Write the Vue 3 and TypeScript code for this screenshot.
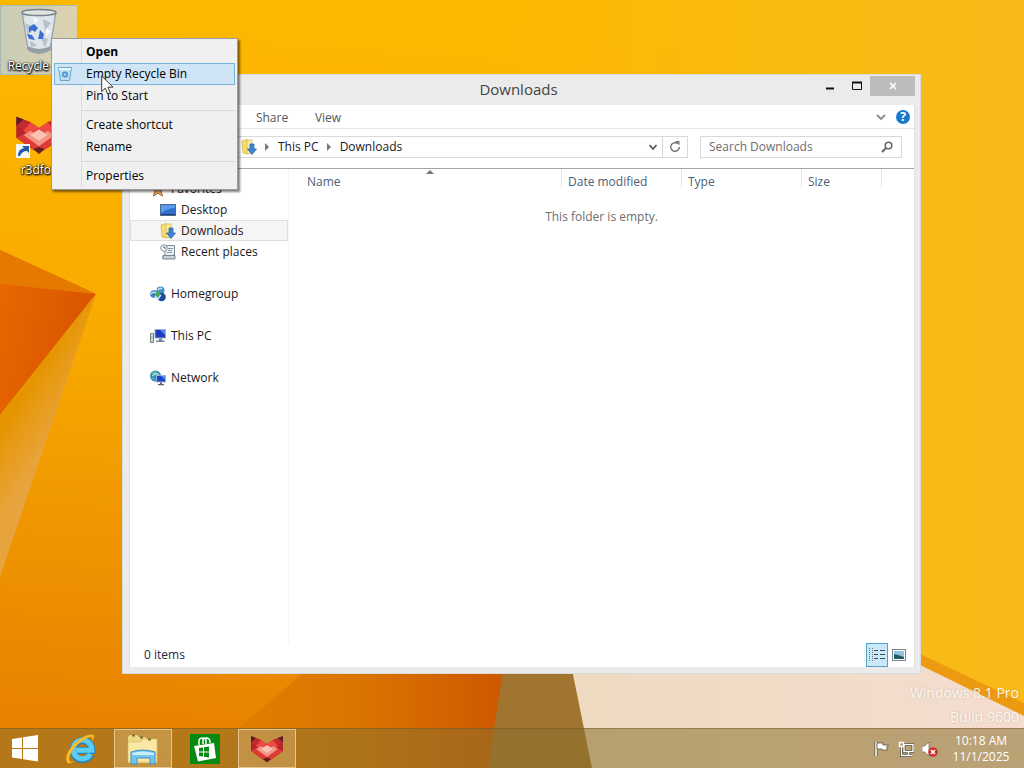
<script setup lang="ts">
import { ref } from 'vue'

interface MenuItem { label: string; bold?: boolean; icon?: boolean }
interface Place { label: string; icon: string; child?: boolean; gap?: boolean; current?: boolean }

const menuGroups: MenuItem[][] = [
  [{ label: 'Open', bold: true }, { label: 'Empty Recycle Bin', icon: true }, { label: 'Pin to Start' }],
  [{ label: 'Create shortcut' }, { label: 'Rename' }],
  [{ label: 'Properties' }],
]
const active = ref('Empty Recycle Bin')

const tabs = ['Share', 'View']
const places: Place[] = [
  { label: 'Favorites', icon: 'star' },
  { label: 'Desktop', icon: 'desktop', child: true },
  { label: 'Downloads', icon: 'downloads', child: true, current: true },
  { label: 'Recent places', icon: 'recent', child: true },
  { label: 'Homegroup', icon: 'homegroup', gap: true },
  { label: 'This PC', icon: 'pc', gap: true },
  { label: 'Network', icon: 'network', gap: true },
]
const search = ref('')
</script>

<template>
  <div class="desktop">
    <svg class="symbols" aria-hidden="true">
      <symbol id="star" viewBox="0 0 16 16">
        <path d="M8 1l2 5 5 .4-4 3.400 1.500 5.200L8 12.200 3.500 15 5 9.800 1 6.400 6 6z" fill="#e8a860" stroke="#a8672c" />
      </symbol>
      <symbol id="desktop" viewBox="0 0 16 16">
        <rect x=".5" y="2.500" width="15" height="11" fill="#2f6fd0" stroke="#4a6790" />
        <path d="M1 3h14v3Q8 6 1 11z" fill="#5b9cec" />
        <path d="M1 12.500h14" stroke="#20406f" />
      </symbol>
      <symbol id="downloads" viewBox="0 0 16 16">
        <path d="M1 2l5-1.500 1 1.500V15l-5-1z" fill="#f6dc74" stroke="#d6ad3c" stroke-width=".7" />
        <path d="M6 1h5V14.500H6z" fill="#fbe99b" stroke="#d9b64c" stroke-width=".7" />
        <path d="M9 5h4v5h2.500l-4.500 5.500L6.500 10H9z" fill="#3b87d6" stroke="#1d5aa4" stroke-width=".7" />
      </symbol>
      <symbol id="recent" viewBox="0 0 16 16">
        <path d="M5 1.500h9.500V11H13v3.500H3.500Q2 14 3 12h2z" fill="#eef2f5" stroke="#7c8a96" />
        <path d="M3 11.500h12v3.500H3z" fill="#c9d2da" stroke="#77848f" />
        <path d="M8 4.500h5M8 6.500h4M7 8.500h5" stroke="#8795a2" />
        <circle cx="4" cy="4" r="3.300" fill="#f4f7f9" stroke="#8c99a5" />
        <path d="M4 2v2h2" fill="none" stroke="#5e6b77" />
      </symbol>
      <symbol id="homegroup" viewBox="0 0 16 16">
        <circle cx="10.500" cy="4.500" r="4" fill="#4292c8" />
        <circle cx="4" cy="8" r="3.800" fill="#3d79c8" />
        <circle cx="11.500" cy="11" r="4.300" fill="#1f4c9f" />
        <circle cx="7.500" cy="8.500" r="3" fill="#49a95b" />
        <path d="M8 4q2-3 4-1M1 8q2-3 5-1M5 10l3 3 3-4" stroke="#c6e7f5" stroke-width="1.400" fill="none" />
      </symbol>
      <symbol id="pc" viewBox="0 0 16 16">
        <path d="M.5 5.500h3v9h-3z" fill="#cad8dc" stroke="#718580" />
        <path d="M1.500 9h1" stroke="#2ea242" />
        <rect x="5" y="1.500" width="10.500" height="8.500" fill="#1f39bf" stroke="#9aaac8" />
        <path d="M10 2h5v5z" fill="#5d85f0" />
        <path d="M9 10.500h3v2h2.500v1.500H6v-1.500h3z" fill="#75859e" />
      </symbol>
      <symbol id="network" viewBox="0 0 16 16">
        <circle cx="5.500" cy="6" r="5.500" fill="#338fc0" />
        <path d="M2 3q3-3 5 0t-4 2zM1 8q3-1 4 2z" fill="#68c58a" />
        <path d="M2 6q3-3 7-2" stroke="#cceaf2" fill="none" />
        <rect x="6.500" y="5.500" width="9" height="6.500" fill="#1b42cc" stroke="#9cb1d0" />
        <path d="M11 6h4v4z" fill="#5a8af2" />
        <path d="M10 12.500h2V14h2v1.300H8V14h2z" fill="#51647f" />
      </symbol>
      <symbol id="fox" viewBox="0 0 34 28">
        <path d="M1 1l10 4 6 4 6-4 10-4v15l-8 6-8 5-8-5-8-6z" fill="#d6322f" />
        <path d="M1 6l8 8-8 2zM33 6l-8 8 8 2z" fill="#b4252a" />
        <path d="M1 1l10 4-5 6-5-4zM33 1L23 5l5 6 5-4z" fill="#c12b2d" />
        <path d="M11 5l6 4-6 6-5-4zM23 5l-6 4 6 6 5-4z" fill="#ec4a42" />
        <path d="M1 1l5 2-5 4.500zM33 1l-5 2 5 4.500z" fill="#5a1f26" />
        <path d="M1 16l8-4 8 6 8-6 8 4-16 11z" fill="#dd3b37" />
        <path d="M6 14l5-3 6 4 6-4 5 3-11 8z" fill="#f39484" />
        <path d="M11 14l6-4 6 4-6 4z" fill="#fbc3b5" />
        <path d="M13 24l4-1.500 4 1.500-4 3.500z" fill="#62201f" />
      </symbol>
    </svg>

    <svg class="wallpaper" viewBox="0 0 1024 768" preserveAspectRatio="none" aria-hidden="true">
      <defs>
        <linearGradient id="sky" x1=".3" y1="0" x2=".2" y2="1">
          <stop offset="0" stop-color="#fdb900" /><stop offset=".45" stop-color="#f9aa00" />
          <stop offset=".75" stop-color="#ee9200" /><stop offset="1" stop-color="#e67f00" />
        </linearGradient>
        <linearGradient id="facet" x1="0" y1="0" x2="1" y2="0">
          <stop offset="0" stop-color="#e28000" /><stop offset=".5" stop-color="#db7700" /><stop offset="1" stop-color="#cd5700" />
        </linearGradient>
        <linearGradient id="side" x1="0" y1="0" x2="1" y2="0">
          <stop offset="0" stop-color="#fabb10" stop-opacity="0" /><stop offset=".5" stop-color="#fabb10" /><stop offset="1" stop-color="#f9ba18" />
        </linearGradient>
        <linearGradient id="beam" gradientUnits="userSpaceOnUse" x1="20" y1="400" x2="60" y2="425">
          <stop offset="0" stop-color="#e69500" /><stop offset="1" stop-color="#e8a43c" />
        </linearGradient>
        <linearGradient id="sand" x1="0" y1="0" x2="1" y2="0">
          <stop offset="0" stop-color="#eedac0" /><stop offset="1" stop-color="#f4ddd0" />
        </linearGradient>
        <linearGradient id="red" x1="0" y1="0" x2="1" y2=".4">
          <stop offset="0" stop-color="#e96900" /><stop offset="1" stop-color="#d95400" />
        </linearGradient>
      </defs>
      <rect width="1024" height="768" fill="url(#sky)" />
      <path d="M500 0h524v768H500z" fill="url(#side)" />
      <path d="M0 250l96 44L0 415z" fill="url(#red)" />
      <path d="M0 250l96 44L0 284z" fill="#e67900" />
      <path d="M96 294L0 415v162z" fill="url(#beam)" />
      <path d="M240 727l62-53h205l-10 94H190z" fill="url(#facet)" />
      <path d="M506 650l-18 118h110l-28-118z" fill="#a1742f" />
      <path d="M568 650l24 118h432v-56l-103-55z" fill="url(#sand)" />
      <path d="M918 653l106 50v13l-106-52z" fill="#eb9a12" />
    </svg>

    <main class="icons">
      <button class="shortcut selected">
        <svg width="48" height="48" viewBox="0 0 48 48" aria-hidden="true">
          <path d="M7 4h34l-6 38q-11 7-22 0z" fill="#ccd5db" fill-opacity=".9" stroke="#8d9aa2" />
          <path d="M9 9l9-5 8 5 10-4 3 5-5 31q-10 5-20 0z" fill="#dfe6eb" />
          <path d="M10 15l8 4-5 8zM28 11l8 4-6 8zM26 29l7 2-3 9zM15 33l7 4-6 3z" fill="#b3c2cd" />
          <path d="M18 8l6 4-5 4zM31 20l5 3-5 5z" fill="#f6fafc" />
          <path d="M12 38q12 6 24 0l-1 4q-11 6-22 0z" fill="#929da4" />
          <ellipse cx="24" cy="4.500" rx="17" ry="3" fill="#dfe3e2" stroke="#78838a" stroke-width="1.500" />
          <path d="M14 19l5-3 4 4-3 4-3-2-3 3zM25 22l4 4-1 5h-5l1-4zM12 26l5 1 3 5-6-1z" fill="#3b6fd4" />
        </svg>
        <span>Recycle Bin</span>
      </button>
      <button class="shortcut">
        <svg width="48" height="48" viewBox="0 0 48 48" aria-hidden="true">
          <use href="#fox" x="0" y="3" width="48" height="40" />
          <rect x="1" y="32" width="14" height="14" fill="#f5f7f8" />
          <path d="M3 44q0-7 6-8l-2-2h7v7l-2-2q-5 0-7 5z" fill="#215ca5" />
        </svg>
        <span>r3dfox</span>
      </button>
    </main>

    <div class="watermark">Windows 8.1 Pro<br />Build 9600</div>

    <section class="window" aria-label="Downloads">
      <header class="titlebar">
        <h1>Downloads</h1>
        <button class="win-btn" aria-label="Minimize">
          <svg width="10" height="12" viewBox="0 0 10 12"><path d="M1 8.500h8" stroke="#111" stroke-width="2" /></svg>
        </button>
        <button class="win-btn" aria-label="Maximize">
          <svg width="10" height="12" viewBox="0 0 10 12"><path d="M.5 2v7.500h9V2" fill="none" stroke="#111" /><path d="M0 2.500h10" stroke="#111" stroke-width="2" /></svg>
        </button>
        <button class="win-btn close" aria-label="Close">
          <svg width="8" height="8" viewBox="0 0 8 8"><path d="M1 1l6 6M7 1L1 7" stroke="#fff" stroke-width="1.600" /></svg>
        </button>
      </header>

      <div class="client">
        <div class="ribbon">
          <button v-for="tab in tabs" :key="tab" class="tab">{{ tab }}</button>
          <span class="spacer"></span>
          <button class="plain" aria-label="Expand the Ribbon">
            <svg width="10" height="8" viewBox="0 0 10 8"><path d="M1 2l4 4 4-4" fill="none" stroke="#8b8b8b" stroke-width="1.800" /></svg>
          </button>
          <button class="help" aria-label="Help">?</button>
        </div>

        <div class="location">
          <nav class="crumbs" aria-label="Address">
            <svg width="16" height="16"><use href="#downloads" /></svg>
            <svg class="sep" width="5" height="8" viewBox="0 0 5 8"><path d="M0 0l4 4-4 4z" fill="#777" /></svg>
            <a href="#">This PC</a>
            <svg class="sep" width="5" height="8" viewBox="0 0 5 8"><path d="M0 0l4 4-4 4z" fill="#777" /></svg>
            <a href="#">Downloads</a>
            <span class="spacer"></span>
            <button class="plain" aria-label="Previous locations">
              <svg width="10" height="8" viewBox="0 0 10 8"><path d="M1.500 2L5 6l3.500-4" fill="none" stroke="#555" stroke-width="1.800" /></svg>
            </button>
            <button class="refresh" aria-label="Refresh">
              <svg width="12" height="12" viewBox="0 0 12 12"><path d="M8.500 2.500A4.300 4.300 0 1 0 10.300 6" fill="none" stroke="#777" stroke-width="1.500" /><path d="M6 0h4.500v4.500z" fill="#777" /></svg>
            </button>
          </nav>
          <label class="search">
            <input v-model="search" type="text" placeholder="Search Downloads" aria-label="Search Downloads" />
            <svg width="12" height="12" viewBox="0 0 12 12" aria-hidden="true"><circle cx="7.500" cy="4.500" r="3.300" fill="none" stroke="#666" stroke-width="1.600" /><path d="M5 7l-4 4" stroke="#666" stroke-width="2" /></svg>
          </label>
        </div>

        <div class="body">
          <nav class="places" aria-label="Places">
            <a v-for="p in places" :key="p.label" href="#" :class="{ child: p.child, gap: p.gap, current: p.current }">
              <svg width="16" height="16" aria-hidden="true"><use :href="'#' + p.icon" /></svg>{{ p.label }}
            </a>
          </nav>
          <div class="files">
            <table>
              <colgroup><col /><col class="c120" /><col class="c120" /><col class="c80" /><col class="c32" /></colgroup>
              <thead>
                <tr>
                  <th class="name">Name
                    <svg class="sort" width="8" height="4" viewBox="0 0 8 4"><path d="M0 4l4-4 4 4z" fill="#777" /></svg>
                  </th>
                  <th>Date modified</th><th>Type</th><th>Size</th><th class="last"></th>
                </tr>
              </thead>
              <tbody><tr><td colspan="5">This folder is empty.</td></tr></tbody>
            </table>
          </div>
        </div>

        <footer class="status">
          <span>0 items</span>
          <span class="spacer"></span>
          <button class="view on" aria-label="Details view">
            <svg width="16" height="14" viewBox="0 0 16 14">
              <path d="M.5 0v14M3.500 0v14" stroke="#667b88" stroke-dasharray="1 1" />
              <path d="M5 2.500h4M11 2.500h5M5 6.500h4M11 6.500h5M5 10.500h4M11 10.500h5" stroke="#3d4d58" />
            </svg>
          </button>
          <button class="view" aria-label="Large thumbnails">
            <svg width="14" height="12" viewBox="0 0 14 12">
              <rect x=".5" y=".5" width="13" height="11" fill="#fff" stroke="#77848d" />
              <path d="M2 2h10v8H2z" fill="#8fc4dc" /><path d="M2 5l4 1 6 2v2H2z" fill="#245a68" />
            </svg>
          </button>
        </footer>
      </div>
    </section>

    <div class="menu" role="menu">
      <div v-for="(group, i) in menuGroups" :key="i" class="group">
        <button
          v-for="item in group" :key="item.label" role="menuitem"
          :class="{ bold: item.bold, active: item.label === active }" @mouseenter="active = item.label"
        >
          <span class="glyph">
            <svg v-if="item.icon" width="16" height="16" viewBox="0 0 16 16" aria-hidden="true">
              <path d="M1.500 1.500h13l-2 13h-9z" fill="#b9dff3" stroke="#6ba6ca" />
              <path d="M2 3h12" stroke="#eefaff" stroke-width="2" />
              <circle cx="8" cy="8.500" r="2.300" fill="#9fc9ec" stroke="#4d93d0" stroke-width="1.500" />
            </svg>
          </span>{{ item.label }}
        </button>
      </div>
    </div>

    <svg class="pointer" width="13" height="20" viewBox="0 0 13 20" aria-hidden="true">
      <path d="M.7 1v15.500l3.600-3.300 2.500 5.900 2.600-1.100-2.500-5.800H12z" fill="#fff" stroke="#222" stroke-width=".9" />
    </svg>

    <footer class="taskbar">
      <button class="task" aria-label="Start">
        <svg width="28" height="28" viewBox="0 0 28 28"><path d="M1 4l10-1.500v10.500H1zM12 2.300L27 0v13H12zM1 14h10v10L1 22.500zM12 14h15v12.500l-15-2.300z" fill="#fff" /></svg>
      </button>
      <button class="task" aria-label="Internet Explorer">
        <svg width="32" height="32" viewBox="0 0 32 32">
          <path d="M26 21.500A9.500 9.500 0 1 1 27 16v1.500H11" fill="none" stroke="#2587bd" stroke-width="7" />
          <path d="M25.500 21A9.300 9.300 0 1 1 26.700 16v1.200H11" fill="none" stroke="#5fcdf3" stroke-width="5" />
          <path d="M27 8Q31 2 27 1.700 20 1 9 11-1 22 2 29q2 3 7-1-5 2-5-2 0-6 8-14Q22 3 27 4z" fill="#fbc52a" stroke="#e19c18" stroke-width=".5" />
        </svg>
      </button>
      <button class="task open" aria-label="File Explorer">
        <svg width="32" height="32" viewBox="0 0 32 32">
          <path d="M1 4l2-2h7l2 2h6l2 2h10v24H1z" fill="#efd786" />
          <path d="M1 9h13l2-3h14v23H1z" fill="#fae9a4" stroke="#d9bd69" stroke-width=".7" />
          <path d="M5 2.500h3M13 4.500h3M21 6.500h3" stroke="#7b6d2b" stroke-width="1.800" />
          <path d="M4 19q12-4 24 0v12h-5v-6H10v6H4z" fill="#77c5ed" stroke="#3b91c7" />
          <path d="M5 20q11-3 22 0v2H5z" fill="#c8edfb" />
        </svg>
      </button>
      <button class="task" aria-label="Store">
        <svg width="30" height="30" viewBox="0 0 30 30">
          <path d="M0 0h30v30H0z" fill="#078a12" />
          <path d="M9 11V7q0-3 4-3 3 0 3 3v3M13 10V6q0-2 3-2 4 0 4 4v1" fill="none" stroke="#fff" stroke-width="1.500" />
          <path d="M4 12l20-3 2 15-18 3.500z" fill="#fff" />
          <path d="M9 14l4-.5v4H9zM14 13.300l5-.8v5h-5zM9 18.500h4v4l-4-.5zM14 18.500h5v5l-5-.8z" fill="#078a12" />
        </svg>
      </button>
      <button class="task open" aria-label="r3dfox">
        <svg width="34" height="28"><use href="#fox" /></svg>
      </button>
      <span class="spacer"></span>
      <div class="tray">
        <button aria-label="Action Center">
          <svg width="16" height="16" viewBox="0 0 16 16"><path d="M2 1v14" stroke="#4c4632" stroke-width="3" /><path d="M2 1v14" stroke="#fff" stroke-width="1.600" /><path d="M3 2h6v2h5.500l-2 2 1 3H8V8H3z" fill="#fff" stroke="#4c4632" stroke-width=".7" /></svg>
        </button>
        <button aria-label="Network">
          <svg width="16" height="16" viewBox="0 0 16 16"><path d="M6 3.500h9v7H6zM10.500 11v3M7 14.500h7M3.500 6v8.500H7" fill="none" stroke="#4c4632" stroke-width="3" /><path d="M6 3.500h9v7H6zM10.500 11v3M7 14.500h7M3.500 6v8.500H7M1.500 1.500h4v4h-4z" fill="none" stroke="#fff" stroke-width="1.400" /></svg>
        </button>
        <button aria-label="Volume muted">
          <svg width="16" height="16" viewBox="0 0 16 16"><path d="M0 5h2.500L7 1v14L2.500 11H0z" fill="#fff" stroke="#5b5238" stroke-width=".6" /><circle cx="11" cy="11" r="4.800" fill="#cc3330" /><path d="M9 9l4 4M13 9l-4 4" stroke="#fff" stroke-width="1.600" /></svg>
        </button>
      </div>
      <button class="clock"><span>10:18 AM</span><span>11/1/2025</span></button>
    </footer>
  </div>
</template>

<style>
html, body { margin: 0; overflow: hidden; }
</style>

<style scoped>
.desktop {
  position: relative;
  display: flex;
  flex-direction: column;
  height: 100vh;
  overflow: hidden;
  font-family: "Open Sans", "Noto Sans", sans-serif;
  font-size: 12px;
  line-height: 16px;
  color: #1a1a1a;
}
.desktop * { box-sizing: border-box; }
button { font: inherit; color: inherit; border: 0; padding: 0; margin: 0; background: none; }
a { color: inherit; text-decoration: none; }
svg { display: block; flex: none; }
.symbols { position: absolute; width: 0; height: 0; }
.wallpaper { position: absolute; inset: 0; width: 100%; height: 100%; }
.spacer { flex: 1; }

.icons { position: relative; flex: 1; display: flex; flex-direction: column; align-items: flex-start; gap: 34px; padding-top: 5px; }
.shortcut {
  display: flex; flex-direction: column; align-items: center;
  width: 78px; height: 70px; padding-top: 2px; border: 1px solid transparent;
  color: #fff; text-shadow: 0 1px 2px #000, 1px 1px 2px #000, 0 0 2px #000;
}
.shortcut.selected { background: linear-gradient(90deg, #c9ccb8, #dcd3ae); border-color: #a9b9ae; }
.shortcut span { margin-top: 2px; white-space: nowrap; }

.watermark {
  position: absolute; right: 5px; bottom: 39px;
  font-size: 14px; line-height: 24px; text-align: right; color: rgba(255, 255, 255, 0.9);
  text-shadow: 0 0 2px rgba(150, 120, 80, 0.4);
}

.window {
  position: absolute; inset: 74px 103px 94px 122px;
  display: flex; flex-direction: column;
  padding: 0 5px 6px 6px; background: #ebebeb; border: 1px solid #dadada;
}
.titlebar { display: flex; height: 30px; align-items: flex-start; }
.titlebar h1 { flex: 1; margin: 0 0 0 92px; font-size: 15px; line-height: 28px; font-weight: 400; text-align: center; color: #444; }
.win-btn { display: grid; place-items: center; width: 27px; height: 20px; margin-top: 1px; }
.win-btn.close { width: 45px; background: #bcbcbc; }

.client { flex: 1; min-height: 0; display: flex; flex-direction: column; background: #fff; border: 1px solid #e0e0e0; border-width: 0 1px; }
.ribbon { display: flex; align-items: center; height: 24px; padding: 0 4px 0 114px; border-bottom: 1px solid #e6e6e6; }
.tab { width: 56px; padding-top: 2px; color: #555; }
.plain { display: grid; place-items: center; width: 18px; height: 20px; }
.help { width: 14px; height: 14px; margin-left: 6px; border-radius: 50%; background: #1979ca; color: #fff; font-weight: 700; line-height: 14px; }

.location { display: flex; gap: 12px; padding: 7px 12px 10px 106px; border-bottom: 1px solid #a5a5a5; }
.crumbs { flex: 1; display: flex; align-items: center; height: 22px; padding-left: 4px; border: 1px solid #d9d9d9; }
.crumbs .sep { margin: 0 8px; }
.refresh { display: grid; place-items: center; width: 25px; height: 20px; border-left: 1px solid #d9d9d9; }
.search { display: flex; align-items: center; width: 202px; height: 22px; padding: 0 8px; border: 1px solid #d9d9d9; }
.search input { flex: 1; min-width: 0; padding: 0; border: 0; outline: 0; background: none; font: inherit; }
.search input::placeholder { color: #6d6d6d; opacity: 1; }

.body { flex: 1; min-height: 0; display: flex; }
.places { width: 159px; padding-top: 9px; border-right: 1px solid #f4f4f4; }
.places a { display: flex; align-items: center; gap: 5px; height: 21px; padding-left: 19px; border: 1px solid transparent; }
.places a.child { padding-left: 29px; }
.places a.gap { margin-top: 21px; }
.places a.current { background: #f5f5f5; border-color: #dedede; }
.files { flex: 1; }
table { width: 100%; border-collapse: collapse; table-layout: fixed; }
.c120 { width: 120px; }
.c80 { width: 80px; }
.c32 { width: 32px; }
th { position: relative; height: 24px; padding: 2px 0 0 6px; font-weight: 400; text-align: left; color: #4c607a; background: linear-gradient(#e5e5e5, #e5e5e5) right 0 top 0 / 1px 18px no-repeat; }
th.name { padding-left: 18px; }
th.last { background: none; }
.sort { position: absolute; left: 50%; top: 1px; }
td { padding: 16px 0 0; text-align: center; color: #6d6d6d; }
.status { display: flex; align-items: center; height: 24px; padding: 0 4px 0 14px; color: #1e2a44; }
.view { display: grid; place-items: center; width: 22px; height: 24px; }
.view.on { background: #c9e8f8; border: 1px solid #52a3ca; }

.menu {
  position: absolute; left: 51px; top: 38px; width: 187px; padding: 2px;
  border: 1px solid #9b9b9b; color: #000;
  background: linear-gradient(#dcdcdc, #dcdcdc) 29px 2px / 1px calc(100% - 4px) no-repeat #f0f0f0;
  box-shadow: 2px 2px 2px rgba(0, 0, 0, 0.5);
}
.group + .group { margin-top: 3px; padding-top: 4px; background: linear-gradient(#d7d7d7, #d7d7d7) 28px 0 / 100% 1px no-repeat; }
.menu button { display: flex; align-items: center; width: 100%; height: 22px; border: 1px solid transparent; text-align: left; }
.menu button.bold { font-weight: 700; }
.menu button.active { background: #cfe5f5; border-color: #78b3dc; }
.glyph { width: 31px; padding-left: 2px; }

.pointer { position: absolute; left: 101px; top: 75px; }

.taskbar {
  position: relative; display: flex; align-items: stretch; height: 40px;
  background: rgba(138, 113, 46, 0.55); border-top: 1px solid rgba(110, 85, 35, 0.5);
}
.task { display: grid; place-items: center; width: 58px; margin-right: 4px; }
.task:first-child { width: 50px; margin-right: 2px; }
.task.open { background: rgba(214, 180, 120, 0.45); border: 1px solid rgba(245, 220, 170, 0.7); }
.tray { display: flex; align-items: center; gap: 8px; }
.clock { display: flex; flex-direction: column; justify-content: center; width: 86px; color: #fff; text-align: center; }
</style>
